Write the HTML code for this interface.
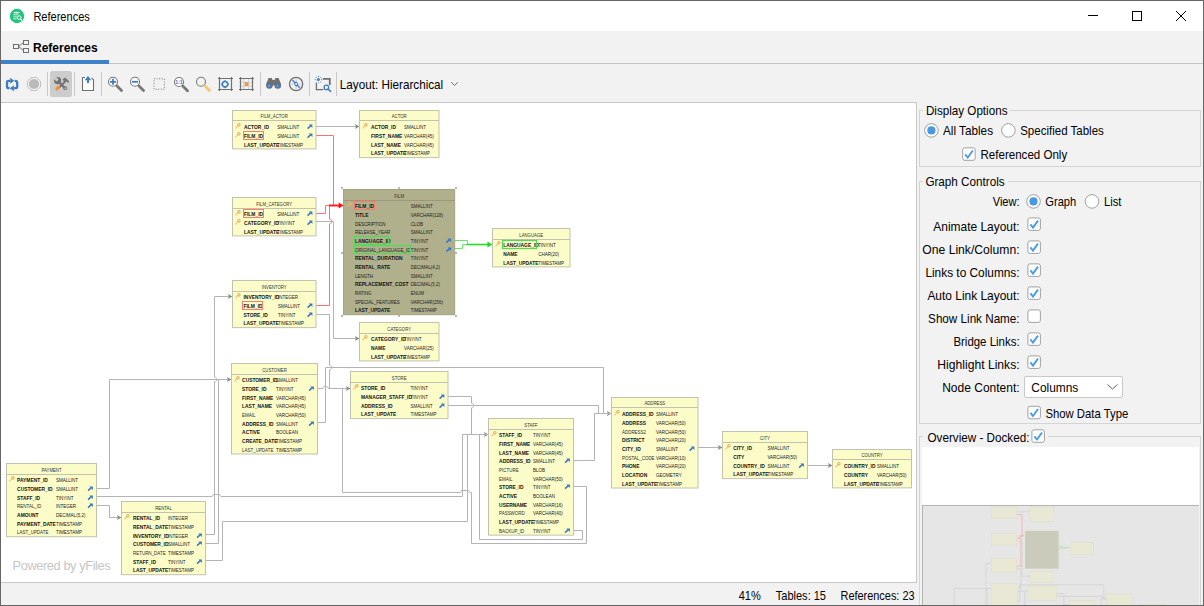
<!DOCTYPE html>
<html><head><meta charset="utf-8">
<style>
*{box-sizing:border-box}
html,body{margin:0;padding:0}
body{width:1204px;height:606px;overflow:hidden;position:relative;background:#f2f2f2;font-family:"Liberation Sans",sans-serif;color:#000}
.abs{position:absolute}
#win{position:absolute;left:0;top:0;width:1204px;height:606px;border:1px solid #666;pointer-events:none;z-index:50}
#title{left:0;top:0;width:1204px;height:31px;background:#fff}
.t{position:absolute;white-space:nowrap;line-height:1}
.sep{position:absolute;top:72px;width:1px;height:24px;background:#c8c8c8}
svg text.th{font-family:"Liberation Sans",sans-serif;font-size:5.05px;fill:#333;text-anchor:middle}
svg text.b{font-family:"Liberation Sans",sans-serif;font-size:4.9px;font-weight:bold;fill:#111}
svg text.r{font-family:"Liberation Sans",sans-serif;font-size:5.05px;fill:#2e2e2e}
svg text.rg{font-family:"Liberation Sans",sans-serif;font-size:5.05px;fill:#1a1a1a}
svg text.ty{font-family:"Liberation Sans",sans-serif;font-size:5.05px;fill:#222}
.gb{position:absolute;border:1px solid #d4d4d4}
.lbl{position:absolute;font-size:11.6px;white-space:nowrap;line-height:1;color:#000}
.cb{position:absolute;width:14px;height:14px;border:1px solid #9a9a9a;border-radius:2px;background:#fff}
.rb{position:absolute;width:14px;height:14px;border:1px solid #8a8a8a;border-radius:50%;background:#fff}
</style></head><body>
<div id="title" class="abs"></div>
<!-- app icon -->
<svg class="abs" style="left:9px;top:8px" width="16" height="16" viewBox="0 0 16 16">
 <circle cx="8" cy="8" r="7.2" fill="#21c47c"/>
 <ellipse cx="7.5" cy="4.6" rx="3.2" ry="0.9" fill="#fff"/>
 <rect x="4.3" y="6.3" width="5" height="1" fill="#c8f0dc"/>
 <rect x="4.3" y="8.3" width="3.5" height="1" fill="#c8f0dc"/>
 <rect x="4.3" y="10.3" width="3.5" height="1" fill="#c8f0dc"/>
 <circle cx="10.2" cy="9.6" r="1.8" fill="none" stroke="#fff" stroke-width="1"/>
 <path d="M11.4 10.9 L12.9 12.4" stroke="#fff" stroke-width="1.2"/>
</svg>
<!-- window buttons -->
<div class="abs" style="left:1088px;top:15px;width:10px;height:1px;background:#000"></div>
<div class="abs" style="left:1132px;top:11px;width:10px;height:10px;border:1px solid #000"></div>
<svg class="abs" style="left:1175px;top:10px" width="12" height="12" viewBox="0 0 12 12"><path d="M1 1 L11 11 M11 1 L1 11" stroke="#000" stroke-width="1"/></svg>

<!-- tab -->
<svg class="abs" style="left:12px;top:39px" width="18" height="15" viewBox="0 0 18 15">
 <rect x="1.5" y="5.5" width="5" height="4" fill="none" stroke="#707070"/>
 <rect x="11.5" y="1.5" width="5" height="4" fill="none" stroke="#707070"/>
 <rect x="11.5" y="9.5" width="5" height="4" fill="none" stroke="#707070"/>
 <path d="M6.5 7.5 L11.5 3.5 M6.5 7.5 L11.5 11.5" stroke="#707070" fill="none"/>
</svg>
<div class="t" style="left:33px;top:42px;font-size:12px;font-weight:bold">References</div>
<div class="abs" style="left:1px;top:60px;width:108px;height:4px;background:#3d82c8"></div>
<div class="abs" style="left:109px;top:63px;width:1094px;height:1px;background:#c4c4c4"></div>

<!-- toolbar -->
<svg class="abs" style="left:0;top:64px" width="470" height="38" viewBox="0 64 470 38">
 <!-- refresh -->
 <g fill="none" stroke="#3d7cc4" stroke-width="2.3">
  <path d="M10 80.8 L8.6 80.8 Q7 80.8 7 82.4 L7 86.4 Q7 88.2 8.8 88.2 L9.6 88.2"/>
  <path d="M14.6 80.8 L15.4 80.8 Q17.2 80.8 17.2 82.6 L17.2 86.4 Q17.2 88.2 15.4 88.2 L14 88.2"/>
 </g>
 <path d="M10.2 77.8 L14.2 80.8 L10.2 83.8 Z" fill="#3d7cc4"/>
 <path d="M13.8 85.2 L9.8 88.2 L13.8 91.2 Z" fill="#3d7cc4"/>
 <!-- stop -->
 <path d="M31.2 77.5 L36.8 77.5 L40.5 81.2 L40.5 86.8 L36.8 90.5 L31.2 90.5 L27.5 86.8 L27.5 81.2 Z" fill="none" stroke="#c2c2c2" stroke-width="1"/>
 <path d="M31.8 79.2 L36.2 79.2 L39 82 L39 86 L36.2 88.8 L31.8 88.8 L29 86 L29 82 Z" fill="#bababa"/>
 <!-- pressed button -->
 <rect x="50" y="71" width="22" height="26" rx="2.5" fill="#cccccc"/>
 <!-- hammer -->
 <path d="M65.2 81.5 L59.2 87.5" stroke="#737373" stroke-width="1.8"/>
 <path d="M62.6 79.2 L65.2 77.6 L69.2 81.4 L68.2 82.8 L65.8 81.6 L64.4 82.2 Z" fill="#737373"/>
 <path d="M56.9 88.9 L58.7 87.1" stroke="#f0913a" stroke-width="3.2" stroke-linecap="round"/>
 <!-- wrench -->
 <path d="M58.6 81.8 L64.8 88" stroke="#737373" stroke-width="2.2"/>
 <circle cx="57.6" cy="80.6" r="3.6" fill="#737373"/>
 <path d="M53.4 78.4 L56.6 81.4 L58.6 79.4 L55.4 76.2 Z" fill="#cccccc"/>
 <circle cx="65.2" cy="88.2" r="1.9" fill="#737373"/>
 <circle cx="65.4" cy="88.4" r="0.8" fill="#cccccc"/>
 <!-- export -->
 <path d="M85 77.5 L82.5 77.5 L82.5 90.5 L93.5 90.5 L93.5 79.8 L91.5 77.8" fill="#fff" stroke="#6e6e6e" stroke-width="1.1"/>
 <path d="M88 79 L88 83" stroke="#3d7cc4" stroke-width="2"/>
 <path d="M84.6 80.2 L88 76 L91.4 80.2 Z" fill="#3d7cc4"/>
 <!-- zoom in -->
 <circle cx="113" cy="81.8" r="4.5" fill="#fff" stroke="#777" stroke-width="1.1"/>
 <path d="M117 86 L121.5 90.4" stroke="#777" stroke-width="2.8" stroke-linecap="round"/>
 <path d="M110 81.8 L116 81.8 M113 78.8 L113 84.8" stroke="#3d7cc4" stroke-width="1.8"/>
 <!-- zoom out -->
 <circle cx="135" cy="81.8" r="4.5" fill="#fff" stroke="#777" stroke-width="1.1"/>
 <path d="M139 86 L143.5 90.4" stroke="#777" stroke-width="2.8" stroke-linecap="round"/>
 <path d="M132 81.8 L138 81.8" stroke="#3d7cc4" stroke-width="1.8"/>
 <!-- dashed rect -->
 <rect x="154" y="78.8" width="10.4" height="10.4" fill="none" stroke="#777" stroke-width="1" stroke-dasharray="1 1.6"/>
 <!-- 1:1 -->
 <circle cx="179" cy="82" r="4.5" fill="#fff" stroke="#777" stroke-width="1.1"/>
 <path d="M183 86.3 L187.5 90.7" stroke="#777" stroke-width="2.8" stroke-linecap="round"/>
 <text x="179" y="83.9" font-size="5.2" font-weight="bold" fill="#3d7cc4" text-anchor="middle" font-family="Liberation Sans">1:1</text>
 <!-- yellow magnifier -->
 <circle cx="201" cy="81.7" r="4.5" fill="none" stroke="#777" stroke-width="1.1"/>
 <path d="M205 86 L209.5 90.6" stroke="#f0c878" stroke-width="2.8" stroke-linecap="round"/>
 <!-- fit -->
 <path d="M219.5 78.5 L231.5 78.5 L231.5 89.5 L219.5 89.5 Z M218 78.5 L233 78.5 M218 89.5 L233 89.5 M219.5 77 L219.5 91 M231.5 77 L231.5 91" fill="none" stroke="#707070" stroke-width="1.2"/>
 <circle cx="225" cy="84.2" r="2.6" fill="#fff" stroke="#3d7cc4" stroke-width="1.5"/>
 <path d="M225 80 L226.6 81.8 L223.4 81.8 Z M225 88.4 L226.6 86.6 L223.4 86.6 Z M220.8 84.2 L222.6 82.6 L222.6 85.8 Z M229.2 84.2 L227.4 82.6 L227.4 85.8 Z" fill="#3d7cc4"/>
 <!-- grid -->
 <path d="M243.8 78.5 L243.8 90 M248.6 78.5 L248.6 90 M239.5 82.4 L253 82.4 M239.5 86.2 L253 86.2" stroke="#cfcfcf" stroke-width="0.9"/>
 <path d="M240.5 78.5 L252.5 78.5 L252.5 89.5 L240.5 89.5 Z M239 78.5 L254 78.5 M239 89.5 L254 89.5 M240.5 77 L240.5 91 M252.5 77 L252.5 91" fill="none" stroke="#707070" stroke-width="1.2"/>
 <rect x="244.6" y="82.2" width="3.8" height="3.8" fill="#ef9448"/>
 <!-- binoculars -->
 <path d="M268.6 78 L271.8 78 L272.6 80 L274.6 80 L275.4 78 L278.6 78 L280.4 82.5 L281 85.5 L266.2 85.5 L266.8 82.5 Z" fill="#707070"/>
 <circle cx="269.4" cy="85.4" r="3.3" fill="#707070"/><circle cx="277.8" cy="85.4" r="3.3" fill="#707070"/>
 <circle cx="269.4" cy="85.6" r="2.1" fill="#3d7cc4"/><circle cx="277.8" cy="85.6" r="2.1" fill="#3d7cc4"/>
 <path d="M267.8 86.6 L269.6 84.6 L269.6 86.6 Z M276.2 86.6 L278 84.6 L278 86.6 Z" fill="#ffffff" opacity="0.5"/>
 <!-- compass -->
 <circle cx="296.1" cy="84" r="6.6" fill="none" stroke="#707070" stroke-width="1.3"/>
 <path d="M292.4 80.2 L299.8 87.8" stroke="#3d7cc4" stroke-width="1.3"/>
 <path d="M296.1 80.9 L298.3 84 L296.1 87.1 L293.9 84 Z" fill="#3d7cc4"/>
 <circle cx="296.1" cy="84" r="0.9" fill="#fff"/>
 <circle cx="296.1" cy="80" r="0.55" fill="#888"/><circle cx="296.1" cy="88" r="0.55" fill="#888"/>
 <circle cx="292.1" cy="84" r="0.55" fill="#888"/><circle cx="300.1" cy="84" r="0.55" fill="#888"/>
 <!-- layout icon -->
 <path d="M316.4 83 L316.4 89.6 L323.4 89.6" fill="none" stroke="#707070" stroke-width="1.3"/>
 <path d="M322.8 78.8 L329.8 78.8 L329.8 85" fill="none" stroke="#707070" stroke-width="1.8"/>
 <circle cx="318.4" cy="79.6" r="1.5" fill="#3d7cc4"/>
 <g fill="#3d7cc4"><circle cx="318.4" cy="76.4" r="0.55"/><circle cx="318.4" cy="82.8" r="0.55"/><circle cx="315.2" cy="79.6" r="0.55"/><circle cx="321.6" cy="79.6" r="0.55"/>
 <circle cx="316.1" cy="77.3" r="0.5"/><circle cx="320.7" cy="77.3" r="0.5"/><circle cx="316.1" cy="81.9" r="0.5"/><circle cx="320.7" cy="81.9" r="0.5"/></g>
 <circle cx="326.4" cy="87.4" r="2.2" fill="#fff" stroke="#3d7cc4" stroke-width="1.3"/>
 <path d="M328 89 L330.6 91.4" stroke="#3d7cc4" stroke-width="1.6" stroke-linecap="round"/>
 <!-- chevron -->
 <path d="M451.2 82.2 L454.5 85.5 L457.8 82.2" fill="none" stroke="#707070" stroke-width="1"/>
</svg>
<div class="sep" style="left:47px"></div>
<div class="sep" style="left:74px"></div>
<div class="sep" style="left:101px"></div>
<div class="sep" style="left:260px"></div>
<div class="sep" style="left:309px"></div>
<div class="sep" style="left:336px"></div>

<!-- canvas -->
<div class="abs" style="left:1px;top:102px;width:916px;height:481px;background:#fff;border:1px solid #c8c8c8;border-left:none"></div>
<svg class="abs" style="left:0;top:0" width="917" height="583" viewBox="0 0 917 583">
<defs><clipPath id="cv"><rect x="1" y="103" width="915" height="479"/></clipPath></defs>
<g clip-path="url(#cv)">
<path d="M316 126.5 L359 126.5" stroke="#b4b4b4" stroke-width="1" fill="none"/>
<path d="M354.9 124.1 L359.5 126.5 L354.9 128.9 L355.9 126.5 Z" fill="#8a8a8a"/>
<path d="M316 221.5 L333.5 221.5 L333.5 338.5 L359 338.5" stroke="#b4b4b4" stroke-width="1" fill="none"/>
<path d="M354.9 336.1 L359.5 338.5 L354.9 340.9 L355.9 338.5 Z" fill="#8a8a8a"/>
<path d="M316 314.5 L329.5 314.5 L329.5 365.1 C332.5 365.1 332.5 369.9 329.5 369.9 L329.5 388.5 L350 388.5" stroke="#b4b4b4" stroke-width="1" fill="none"/>
<path d="M345.9 386.1 L350.5 388.5 L345.9 390.9 L346.9 388.5 Z" fill="#8a8a8a"/>
<path d="M318 388.5 L322.9 388.5 C322.9 385.3 328.1 385.3 328.1 388.5 L329.5 388.5" stroke="#b4b4b4" stroke-width="1" fill="none"/>
<path d="M318 422.5 L325.5 422.5 L325.5 367.5 L603.5 367.5 L603.5 413.5 L611 413.5" stroke="#b4b4b4" stroke-width="1" fill="none"/>
<path d="M606.9 411.1 L611.5 413.5 L606.9 415.9 L607.9 413.5 Z" fill="#8a8a8a"/>
<path d="M448 396.5 L471.5 396.5 L471.5 403.1 C474.5 403.1 474.5 407.9 471.5 407.9 L471.5 434.5 L488 434.5" stroke="#b4b4b4" stroke-width="1" fill="none"/>
<path d="M483.9 432.1 L488.5 434.5 L483.9 436.9 L484.9 434.5 Z" fill="#8a8a8a"/>
<path d="M448 405.5 L598.5 405.5 L598.5 413.5 L611 413.5" stroke="#b4b4b4" stroke-width="1" fill="none"/>
<path d="M574 460.5 L594.5 460.5 L594.5 413.5 L611 413.5" stroke="#b4b4b4" stroke-width="1" fill="none"/>
<path d="M574 486.5 L586.5 486.5 L586.5 543.5 L471.5 543.5 L471.5 492.5 L469.8 492.5 L468.7 490.5 L461.3 490.5 L460.2 492.5 L342.5 492.5 L342.5 388.5" stroke="#b4b4b4" stroke-width="1" fill="none"/>
<path d="M574 530.5 L582.5 530.5 L582.5 539.5 L479.5 539.5 L479.5 434.5 L488 434.5" stroke="#b4b4b4" stroke-width="1" fill="none"/>
<path d="M698 447.5 L722 447.5" stroke="#b4b4b4" stroke-width="1" fill="none"/>
<path d="M717.9 445.1 L722.5 447.5 L717.9 449.9 L718.9 447.5 Z" fill="#8a8a8a"/>
<path d="M808 465.5 L832 465.5" stroke="#b4b4b4" stroke-width="1" fill="none"/>
<path d="M827.9 463.1 L832.5 465.5 L827.9 467.9 L828.9 465.5 Z" fill="#8a8a8a"/>
<path d="M97 488.5 L109.5 488.5 L109.5 379.5 L231 379.5" stroke="#b4b4b4" stroke-width="1" fill="none"/>
<path d="M226.9 377.1 L231.5 379.5 L226.9 381.9 L227.9 379.5 Z" fill="#8a8a8a"/>
<path d="M97 496.5 L212.2 496.5 L213.3 494.5 L219.7 494.5 L220.8 496.5 L462.5 496.5 L462.5 434.5 L488 434.5" stroke="#b4b4b4" stroke-width="1" fill="none"/>
<path d="M97 505.5 L109.5 505.5 L109.5 517.5 L121 517.5" stroke="#b4b4b4" stroke-width="1" fill="none"/>
<path d="M116.9 515.1 L121.5 517.5 L116.9 519.9 L117.9 517.5 Z" fill="#8a8a8a"/>
<path d="M206 534.5 L214.5 534.5 L214.5 381.9 C217.5 381.9 217.5 377.1 214.5 377.1 L214.5 296.5 L232 296.5" stroke="#b4b4b4" stroke-width="1" fill="none"/>
<path d="M227.9 294.1 L232.5 296.5 L227.9 298.9 L228.9 296.5 Z" fill="#8a8a8a"/>
<path d="M206 543.5 L218.5 543.5 L218.5 379.5" stroke="#b4b4b4" stroke-width="1" fill="none"/>
<path d="M206 560.5 L222.5 560.5 L222.5 521.5 L467.5 521.5 L467.5 434.5 L488 434.5" stroke="#b4b4b4" stroke-width="1" fill="none"/>
<path d="M316 135.5 L333.5 135.5 L333.5 205.5" stroke="#ff7070" stroke-width="1" fill="none"/>
<path d="M316 213.5 L325.5 213.5 L325.5 205.5 L339 205.5" stroke="#ff7070" stroke-width="1" fill="none"/>
<path d="M316 305.5 L329.5 305.5 L329.5 223.9 C332.5 223.9 332.5 219.1 329.5 219.1 L329.5 205.5" stroke="#ff7070" stroke-width="1" fill="none"/>
<path d="M329 205.5 L340 205.5" stroke="#ff2020" stroke-width="2" fill="none"/>
<path d="M338.6 202.6 L343.6 205.5 L338.6 208.4 Z" fill="#ff1010"/>
<path d="M455 240.5 L467.5 240.5 L467.5 244.5" stroke="#60ec60" stroke-width="1" fill="none"/>
<path d="M455 248.5 L462.5 248.5 L462.5 244.5 L467.5 244.5" stroke="#60ec60" stroke-width="1" fill="none"/>
<path d="M467 244.5 L488 244.5" stroke="#22e022" stroke-width="1.6" fill="none"/>
<path d="M487.4 241.6 L492.4 244.5 L487.4 247.4 Z" fill="#20dd20"/>
<rect x="232.5" y="110.5" width="83.5" height="38.4" fill="#fcfcc8" stroke="#c2c2ae" stroke-width="1"/>
<line x1="232.5" y1="120.5" x2="316.0" y2="120.5" stroke="#c2c2ae" stroke-width="1"/>
<text x="274.2" y="117.9" class="th" textLength="27.2" lengthAdjust="spacingAndGlyphs">FILM_ACTOR</text>
<text x="244.0" y="128.8" class="b">ACTOR_ID</text>
<text x="277.2" y="128.8" class="ty" textLength="22.0" lengthAdjust="spacingAndGlyphs">SMALLINT</text>
<g transform="translate(235.6,127.0)" stroke="#eab062" fill="none"><circle cx="3.3" cy="-2.3" r="1.2" stroke-width="1.1"/><path d="M2.4 -1.4 L-0.2 1.1" stroke-width="1"/><path d="M0.6 0.5 L1.3 1.2" stroke-width="0.7"/></g>
<g transform="translate(307.4,127.0)"><path d="M0.2 1.6 L3.4 -1.4" stroke="#3a78c8" stroke-width="1.5" fill="none"/><path d="M1.4 -2.6 L5 -2.6 L5 1 Z" fill="#3a78c8"/></g>
<text x="244.0" y="137.8" class="b">FILM_ID</text>
<text x="277.2" y="137.8" class="ty" textLength="22.0" lengthAdjust="spacingAndGlyphs">SMALLINT</text>
<g transform="translate(235.6,136.0)" stroke="#eab062" fill="none"><circle cx="3.3" cy="-2.3" r="1.2" stroke-width="1.1"/><path d="M2.4 -1.4 L-0.2 1.1" stroke-width="1"/><path d="M0.6 0.5 L1.3 1.2" stroke-width="0.7"/></g>
<g transform="translate(307.4,136.0)"><path d="M0.2 1.6 L3.4 -1.4" stroke="#3a78c8" stroke-width="1.5" fill="none"/><path d="M1.4 -2.6 L5 -2.6 L5 1 Z" fill="#3a78c8"/></g>
<rect x="243.5" y="131.5" width="20" height="8" fill="none" stroke="#ff7a6a" stroke-width="1"/>
<text x="244.0" y="146.8" class="b">LAST_UPDATE</text>
<text x="277.2" y="146.8" class="ty" textLength="25.9" lengthAdjust="spacingAndGlyphs">TIMESTAMP</text>
<rect x="359.5" y="110.5" width="79.5" height="47.1" fill="#fcfcc8" stroke="#c2c2ae" stroke-width="1"/>
<line x1="359.5" y1="120.5" x2="439.0" y2="120.5" stroke="#c2c2ae" stroke-width="1"/>
<text x="399.2" y="117.9" class="th" textLength="15.0" lengthAdjust="spacingAndGlyphs">ACTOR</text>
<text x="371.0" y="128.8" class="b">ACTOR_ID</text>
<text x="404.0" y="128.8" class="ty" textLength="22.0" lengthAdjust="spacingAndGlyphs">SMALLINT</text>
<g transform="translate(362.6,127.0)" stroke="#eab062" fill="none"><circle cx="3.3" cy="-2.3" r="1.2" stroke-width="1.1"/><path d="M2.4 -1.4 L-0.2 1.1" stroke-width="1"/><path d="M0.6 0.5 L1.3 1.2" stroke-width="0.7"/></g>
<text x="371.0" y="137.8" class="b">FIRST_NAME</text>
<text x="404.0" y="137.8" class="ty" textLength="29.7" lengthAdjust="spacingAndGlyphs">VARCHAR(45)</text>
<text x="371.0" y="146.8" class="b">LAST_NAME</text>
<text x="404.0" y="146.8" class="ty" textLength="29.7" lengthAdjust="spacingAndGlyphs">VARCHAR(45)</text>
<text x="371.0" y="154.8" class="b">LAST_UPDATE</text>
<text x="404.0" y="154.8" class="ty" textLength="25.9" lengthAdjust="spacingAndGlyphs">TIMESTAMP</text>
<rect x="343.5" y="189.5" width="111.2" height="125.2" fill="#b0b08c" stroke="#a4a482" stroke-width="1"/>
<line x1="343.5" y1="200.5" x2="454.7" y2="200.5" stroke="#9a9a7a" stroke-width="1"/>
<text x="399.1" y="197.9" class="th" textLength="9.8" lengthAdjust="spacingAndGlyphs">FILM</text>
<text x="355.0" y="207.8" class="b">FILM_ID</text>
<text x="410.8" y="207.8" class="ty" textLength="22.0" lengthAdjust="spacingAndGlyphs">SMALLINT</text>
<g transform="translate(346.6,206.0)" stroke="#eab062" fill="none"><circle cx="3.3" cy="-2.3" r="1.2" stroke-width="1.1"/><path d="M2.4 -1.4 L-0.2 1.1" stroke-width="1"/><path d="M0.6 0.5 L1.3 1.2" stroke-width="0.7"/></g>
<rect x="354.5" y="201.5" width="20" height="8" fill="none" stroke="#ff7a6a" stroke-width="1"/>
<text x="355.0" y="216.8" class="b">TITLE</text>
<text x="410.8" y="216.8" class="ty" textLength="32.2" lengthAdjust="spacingAndGlyphs">VARCHAR(128)</text>
<text x="355.0" y="225.8" class="rg" textLength="30.4" lengthAdjust="spacingAndGlyphs">DESCRIPTION</text>
<text x="410.8" y="225.8" class="ty" textLength="12.3" lengthAdjust="spacingAndGlyphs">CLOB</text>
<text x="355.0" y="233.8" class="rg" textLength="35.1" lengthAdjust="spacingAndGlyphs">RELEASE_YEAR</text>
<text x="410.8" y="233.8" class="ty" textLength="22.0" lengthAdjust="spacingAndGlyphs">SMALLINT</text>
<text x="355.0" y="242.8" class="b">LANGUAGE_ID</text>
<text x="410.8" y="242.8" class="ty" textLength="17.5" lengthAdjust="spacingAndGlyphs">TINYINT</text>
<g transform="translate(446.1,241.0)"><path d="M0.2 1.6 L3.4 -1.4" stroke="#3a78c8" stroke-width="1.5" fill="none"/><path d="M1.4 -2.6 L5 -2.6 L5 1 Z" fill="#3a78c8"/></g>
<rect x="354.5" y="236.5" width="34" height="8" fill="none" stroke="#58d858" stroke-width="1.3"/>
<text x="355.0" y="251.8" class="rg" textLength="55.4" lengthAdjust="spacingAndGlyphs">ORIGINAL_LANGUAGE_ID</text>
<text x="410.8" y="251.8" class="ty" textLength="17.5" lengthAdjust="spacingAndGlyphs">TINYINT</text>
<g transform="translate(446.1,250.0)"><path d="M0.2 1.6 L3.4 -1.4" stroke="#3a78c8" stroke-width="1.5" fill="none"/><path d="M1.4 -2.6 L5 -2.6 L5 1 Z" fill="#3a78c8"/></g>
<rect x="354.5" y="245.5" width="56" height="8" fill="none" stroke="#58d858" stroke-width="1.3"/>
<text x="355.0" y="259.8" class="b">RENTAL_DURATION</text>
<text x="410.8" y="259.8" class="ty" textLength="17.5" lengthAdjust="spacingAndGlyphs">TINYINT</text>
<text x="355.0" y="268.8" class="b">RENTAL_RATE</text>
<text x="410.8" y="268.8" class="ty" textLength="29.3" lengthAdjust="spacingAndGlyphs">DECIMAL(4,2)</text>
<text x="355.0" y="277.8" class="rg" textLength="18.0" lengthAdjust="spacingAndGlyphs">LENGTH</text>
<text x="410.8" y="277.8" class="ty" textLength="22.0" lengthAdjust="spacingAndGlyphs">SMALLINT</text>
<text x="355.0" y="285.8" class="b">REPLACEMENT_COST</text>
<text x="410.8" y="285.8" class="ty" textLength="29.3" lengthAdjust="spacingAndGlyphs">DECIMAL(5,2)</text>
<text x="355.0" y="294.8" class="rg" textLength="16.5" lengthAdjust="spacingAndGlyphs">RATING</text>
<text x="410.8" y="294.8" class="ty" textLength="13.2" lengthAdjust="spacingAndGlyphs">ENUM</text>
<text x="355.0" y="303.8" class="rg" textLength="44.7" lengthAdjust="spacingAndGlyphs">SPECIAL_FEATURES</text>
<text x="410.8" y="303.8" class="ty" textLength="32.2" lengthAdjust="spacingAndGlyphs">VARCHAR(256)</text>
<text x="355.0" y="311.8" class="b">LAST_UPDATE</text>
<text x="410.8" y="311.8" class="ty" textLength="25.9" lengthAdjust="spacingAndGlyphs">TIMESTAMP</text>
<rect x="232.5" y="197.5" width="83.5" height="38.4" fill="#fcfcc8" stroke="#c2c2ae" stroke-width="1"/>
<line x1="232.5" y1="208.5" x2="316.0" y2="208.5" stroke="#c2c2ae" stroke-width="1"/>
<text x="274.2" y="205.9" class="th" textLength="35.9" lengthAdjust="spacingAndGlyphs">FILM_CATEGORY</text>
<text x="244.0" y="215.8" class="b">FILM_ID</text>
<text x="277.2" y="215.8" class="ty" textLength="22.0" lengthAdjust="spacingAndGlyphs">SMALLINT</text>
<g transform="translate(235.6,214.0)" stroke="#eab062" fill="none"><circle cx="3.3" cy="-2.3" r="1.2" stroke-width="1.1"/><path d="M2.4 -1.4 L-0.2 1.1" stroke-width="1"/><path d="M0.6 0.5 L1.3 1.2" stroke-width="0.7"/></g>
<g transform="translate(307.4,214.0)"><path d="M0.2 1.6 L3.4 -1.4" stroke="#3a78c8" stroke-width="1.5" fill="none"/><path d="M1.4 -2.6 L5 -2.6 L5 1 Z" fill="#3a78c8"/></g>
<rect x="243.5" y="209.5" width="20" height="8" fill="none" stroke="#ff7a6a" stroke-width="1"/>
<text x="244.0" y="224.8" class="b">CATEGORY_ID</text>
<text x="277.2" y="224.8" class="ty" textLength="17.5" lengthAdjust="spacingAndGlyphs">TINYINT</text>
<g transform="translate(235.6,223.0)" stroke="#eab062" fill="none"><circle cx="3.3" cy="-2.3" r="1.2" stroke-width="1.1"/><path d="M2.4 -1.4 L-0.2 1.1" stroke-width="1"/><path d="M0.6 0.5 L1.3 1.2" stroke-width="0.7"/></g>
<g transform="translate(307.4,223.0)"><path d="M0.2 1.6 L3.4 -1.4" stroke="#3a78c8" stroke-width="1.5" fill="none"/><path d="M1.4 -2.6 L5 -2.6 L5 1 Z" fill="#3a78c8"/></g>
<text x="244.0" y="233.8" class="b">LAST_UPDATE</text>
<text x="277.2" y="233.8" class="ty" textLength="25.9" lengthAdjust="spacingAndGlyphs">TIMESTAMP</text>
<rect x="232.5" y="280.5" width="83.5" height="47.1" fill="#fcfcc8" stroke="#c2c2ae" stroke-width="1"/>
<line x1="232.5" y1="291.5" x2="316.0" y2="291.5" stroke="#c2c2ae" stroke-width="1"/>
<text x="274.2" y="288.9" class="th" textLength="24.9" lengthAdjust="spacingAndGlyphs">INVENTORY</text>
<text x="243.5" y="298.8" class="b">INVENTORY_ID</text>
<text x="278.0" y="298.8" class="ty" textLength="20.0" lengthAdjust="spacingAndGlyphs">INTEGER</text>
<g transform="translate(235.6,297.0)" stroke="#eab062" fill="none"><circle cx="3.3" cy="-2.3" r="1.2" stroke-width="1.1"/><path d="M2.4 -1.4 L-0.2 1.1" stroke-width="1"/><path d="M0.6 0.5 L1.3 1.2" stroke-width="0.7"/></g>
<text x="243.5" y="307.8" class="b">FILM_ID</text>
<text x="278.0" y="307.8" class="ty" textLength="22.0" lengthAdjust="spacingAndGlyphs">SMALLINT</text>
<g transform="translate(307.4,306.0)"><path d="M0.2 1.6 L3.4 -1.4" stroke="#3a78c8" stroke-width="1.5" fill="none"/><path d="M1.4 -2.6 L5 -2.6 L5 1 Z" fill="#3a78c8"/></g>
<rect x="242.5" y="301.5" width="20" height="8" fill="none" stroke="#ff7a6a" stroke-width="1"/>
<text x="243.5" y="316.8" class="b">STORE_ID</text>
<text x="278.0" y="316.8" class="ty" textLength="17.5" lengthAdjust="spacingAndGlyphs">TINYINT</text>
<g transform="translate(307.4,315.0)"><path d="M0.2 1.6 L3.4 -1.4" stroke="#3a78c8" stroke-width="1.5" fill="none"/><path d="M1.4 -2.6 L5 -2.6 L5 1 Z" fill="#3a78c8"/></g>
<text x="243.5" y="324.8" class="b">LAST_UPDATE</text>
<text x="278.0" y="324.8" class="ty" textLength="25.9" lengthAdjust="spacingAndGlyphs">TIMESTAMP</text>
<rect x="492.5" y="228.5" width="77.5" height="38.4" fill="#fcfcc8" stroke="#c2c2ae" stroke-width="1"/>
<line x1="492.5" y1="239.5" x2="570.0" y2="239.5" stroke="#c2c2ae" stroke-width="1"/>
<text x="531.2" y="236.9" class="th" textLength="23.9" lengthAdjust="spacingAndGlyphs">LANGUAGE</text>
<text x="503.2" y="246.8" class="b">LANGUAGE_ID</text>
<text x="538.2" y="246.8" class="ty" textLength="17.5" lengthAdjust="spacingAndGlyphs">TINYINT</text>
<g transform="translate(495.6,245.0)" stroke="#eab062" fill="none"><circle cx="3.3" cy="-2.3" r="1.2" stroke-width="1.1"/><path d="M2.4 -1.4 L-0.2 1.1" stroke-width="1"/><path d="M0.6 0.5 L1.3 1.2" stroke-width="0.7"/></g>
<rect x="502.5" y="240.5" width="34" height="8" fill="none" stroke="#58d858" stroke-width="1.3"/>
<text x="503.2" y="255.8" class="b">NAME</text>
<text x="538.2" y="255.8" class="ty" textLength="20.8" lengthAdjust="spacingAndGlyphs">CHAR(20)</text>
<text x="503.2" y="264.8" class="b">LAST_UPDATE</text>
<text x="538.2" y="264.8" class="ty" textLength="25.9" lengthAdjust="spacingAndGlyphs">TIMESTAMP</text>
<rect x="359.5" y="322.5" width="79.5" height="38.4" fill="#fcfcc8" stroke="#c2c2ae" stroke-width="1"/>
<line x1="359.5" y1="333.5" x2="439.0" y2="333.5" stroke="#c2c2ae" stroke-width="1"/>
<text x="399.2" y="330.9" class="th" textLength="23.7" lengthAdjust="spacingAndGlyphs">CATEGORY</text>
<text x="371.0" y="340.8" class="b">CATEGORY_ID</text>
<text x="404.0" y="340.8" class="ty" textLength="17.5" lengthAdjust="spacingAndGlyphs">TINYINT</text>
<g transform="translate(362.6,339.0)" stroke="#eab062" fill="none"><circle cx="3.3" cy="-2.3" r="1.2" stroke-width="1.1"/><path d="M2.4 -1.4 L-0.2 1.1" stroke-width="1"/><path d="M0.6 0.5 L1.3 1.2" stroke-width="0.7"/></g>
<text x="371.0" y="349.8" class="b">NAME</text>
<text x="404.0" y="349.8" class="ty" textLength="29.7" lengthAdjust="spacingAndGlyphs">VARCHAR(25)</text>
<text x="371.0" y="358.8" class="b">LAST_UPDATE</text>
<text x="404.0" y="358.8" class="ty" textLength="25.9" lengthAdjust="spacingAndGlyphs">TIMESTAMP</text>
<rect x="231.5" y="363.5" width="86.0" height="90.5" fill="#fcfcc8" stroke="#c2c2ae" stroke-width="1"/>
<line x1="231.5" y1="374.5" x2="317.5" y2="374.5" stroke="#c2c2ae" stroke-width="1"/>
<text x="274.5" y="371.9" class="th" textLength="24.5" lengthAdjust="spacingAndGlyphs">CUSTOMER</text>
<text x="242.1" y="381.8" class="b">CUSTOMER_ID</text>
<text x="276.1" y="381.8" class="ty" textLength="22.0" lengthAdjust="spacingAndGlyphs">SMALLINT</text>
<g transform="translate(234.6,380.0)" stroke="#eab062" fill="none"><circle cx="3.3" cy="-2.3" r="1.2" stroke-width="1.1"/><path d="M2.4 -1.4 L-0.2 1.1" stroke-width="1"/><path d="M0.6 0.5 L1.3 1.2" stroke-width="0.7"/></g>
<text x="242.1" y="390.8" class="b">STORE_ID</text>
<text x="276.1" y="390.8" class="ty" textLength="17.5" lengthAdjust="spacingAndGlyphs">TINYINT</text>
<g transform="translate(308.9,389.0)"><path d="M0.2 1.6 L3.4 -1.4" stroke="#3a78c8" stroke-width="1.5" fill="none"/><path d="M1.4 -2.6 L5 -2.6 L5 1 Z" fill="#3a78c8"/></g>
<text x="242.1" y="399.8" class="b">FIRST_NAME</text>
<text x="276.1" y="399.8" class="ty" textLength="29.7" lengthAdjust="spacingAndGlyphs">VARCHAR(45)</text>
<text x="242.1" y="407.8" class="b">LAST_NAME</text>
<text x="276.1" y="407.8" class="ty" textLength="29.7" lengthAdjust="spacingAndGlyphs">VARCHAR(45)</text>
<text x="242.1" y="416.8" class="r" textLength="13.4" lengthAdjust="spacingAndGlyphs">EMAIL</text>
<text x="276.1" y="416.8" class="ty" textLength="29.7" lengthAdjust="spacingAndGlyphs">VARCHAR(50)</text>
<text x="242.1" y="425.8" class="b">ADDRESS_ID</text>
<text x="276.1" y="425.8" class="ty" textLength="22.0" lengthAdjust="spacingAndGlyphs">SMALLINT</text>
<g transform="translate(308.9,424.0)"><path d="M0.2 1.6 L3.4 -1.4" stroke="#3a78c8" stroke-width="1.5" fill="none"/><path d="M1.4 -2.6 L5 -2.6 L5 1 Z" fill="#3a78c8"/></g>
<text x="242.1" y="433.8" class="b">ACTIVE</text>
<text x="276.1" y="433.8" class="ty" textLength="21.8" lengthAdjust="spacingAndGlyphs">BOOLEAN</text>
<text x="242.1" y="442.8" class="b">CREATE_DATE</text>
<text x="276.1" y="442.8" class="ty" textLength="25.9" lengthAdjust="spacingAndGlyphs">TIMESTAMP</text>
<text x="242.1" y="451.8" class="r" textLength="31.3" lengthAdjust="spacingAndGlyphs">LAST_UPDATE</text>
<text x="276.1" y="451.8" class="ty" textLength="25.9" lengthAdjust="spacingAndGlyphs">TIMESTAMP</text>
<rect x="350.5" y="371.5" width="97.5" height="47.1" fill="#fcfcc8" stroke="#c2c2ae" stroke-width="1"/>
<line x1="350.5" y1="382.5" x2="448.0" y2="382.5" stroke="#c2c2ae" stroke-width="1"/>
<text x="399.2" y="379.9" class="th" textLength="14.7" lengthAdjust="spacingAndGlyphs">STORE</text>
<text x="361.0" y="389.8" class="b">STORE_ID</text>
<text x="410.5" y="389.8" class="ty" textLength="17.5" lengthAdjust="spacingAndGlyphs">TINYINT</text>
<g transform="translate(353.6,388.0)" stroke="#eab062" fill="none"><circle cx="3.3" cy="-2.3" r="1.2" stroke-width="1.1"/><path d="M2.4 -1.4 L-0.2 1.1" stroke-width="1"/><path d="M0.6 0.5 L1.3 1.2" stroke-width="0.7"/></g>
<text x="361.0" y="398.8" class="b">MANAGER_STAFF_ID</text>
<text x="410.5" y="398.8" class="ty" textLength="17.5" lengthAdjust="spacingAndGlyphs">TINYINT</text>
<g transform="translate(439.4,397.0)"><path d="M0.2 1.6 L3.4 -1.4" stroke="#3a78c8" stroke-width="1.5" fill="none"/><path d="M1.4 -2.6 L5 -2.6 L5 1 Z" fill="#3a78c8"/></g>
<text x="361.0" y="407.8" class="b">ADDRESS_ID</text>
<text x="410.5" y="407.8" class="ty" textLength="22.0" lengthAdjust="spacingAndGlyphs">SMALLINT</text>
<g transform="translate(439.4,406.0)"><path d="M0.2 1.6 L3.4 -1.4" stroke="#3a78c8" stroke-width="1.5" fill="none"/><path d="M1.4 -2.6 L5 -2.6 L5 1 Z" fill="#3a78c8"/></g>
<text x="361.0" y="415.8" class="b">LAST_UPDATE</text>
<text x="410.5" y="415.8" class="ty" textLength="25.9" lengthAdjust="spacingAndGlyphs">TIMESTAMP</text>
<rect x="611.5" y="397.5" width="86.5" height="90.5" fill="#fcfcc8" stroke="#c2c2ae" stroke-width="1"/>
<line x1="611.5" y1="407.5" x2="698.0" y2="407.5" stroke="#c2c2ae" stroke-width="1"/>
<text x="654.8" y="404.9" class="th" textLength="20.8" lengthAdjust="spacingAndGlyphs">ADDRESS</text>
<text x="622.0" y="415.8" class="b">ADDRESS_ID</text>
<text x="656.0" y="415.8" class="ty" textLength="22.0" lengthAdjust="spacingAndGlyphs">SMALLINT</text>
<g transform="translate(614.6,414.0)" stroke="#eab062" fill="none"><circle cx="3.3" cy="-2.3" r="1.2" stroke-width="1.1"/><path d="M2.4 -1.4 L-0.2 1.1" stroke-width="1"/><path d="M0.6 0.5 L1.3 1.2" stroke-width="0.7"/></g>
<text x="622.0" y="424.8" class="b">ADDRESS</text>
<text x="656.0" y="424.8" class="ty" textLength="29.7" lengthAdjust="spacingAndGlyphs">VARCHAR(50)</text>
<text x="622.0" y="433.8" class="r" textLength="24.0" lengthAdjust="spacingAndGlyphs">ADDRESS2</text>
<text x="656.0" y="433.8" class="ty" textLength="29.7" lengthAdjust="spacingAndGlyphs">VARCHAR(50)</text>
<text x="622.0" y="441.8" class="b">DISTRICT</text>
<text x="656.0" y="441.8" class="ty" textLength="29.7" lengthAdjust="spacingAndGlyphs">VARCHAR(20)</text>
<text x="622.0" y="450.8" class="b">CITY_ID</text>
<text x="656.0" y="450.8" class="ty" textLength="22.0" lengthAdjust="spacingAndGlyphs">SMALLINT</text>
<g transform="translate(689.4,449.0)"><path d="M0.2 1.6 L3.4 -1.4" stroke="#3a78c8" stroke-width="1.5" fill="none"/><path d="M1.4 -2.6 L5 -2.6 L5 1 Z" fill="#3a78c8"/></g>
<text x="622.0" y="459.8" class="r" textLength="32.6" lengthAdjust="spacingAndGlyphs">POSTAL_CODE</text>
<text x="656.0" y="459.8" class="ty" textLength="29.7" lengthAdjust="spacingAndGlyphs">VARCHAR(10)</text>
<text x="622.0" y="467.8" class="b">PHONE</text>
<text x="656.0" y="467.8" class="ty" textLength="29.7" lengthAdjust="spacingAndGlyphs">VARCHAR(20)</text>
<text x="622.0" y="476.8" class="b">LOCATION</text>
<text x="656.0" y="476.8" class="ty" textLength="25.7" lengthAdjust="spacingAndGlyphs">GEOMETRY</text>
<text x="622.0" y="485.8" class="b">LAST_UPDATE</text>
<text x="656.0" y="485.8" class="ty" textLength="25.9" lengthAdjust="spacingAndGlyphs">TIMESTAMP</text>
<rect x="488.5" y="418.5" width="85.0" height="116.6" fill="#fcfcc8" stroke="#c2c2ae" stroke-width="1"/>
<line x1="488.5" y1="429.5" x2="573.5" y2="429.5" stroke="#c2c2ae" stroke-width="1"/>
<text x="531.0" y="426.9" class="th" textLength="13.3" lengthAdjust="spacingAndGlyphs">STAFF</text>
<text x="499.1" y="436.8" class="b">STAFF_ID</text>
<text x="533.1" y="436.8" class="ty" textLength="17.5" lengthAdjust="spacingAndGlyphs">TINYINT</text>
<g transform="translate(491.6,435.0)" stroke="#eab062" fill="none"><circle cx="3.3" cy="-2.3" r="1.2" stroke-width="1.1"/><path d="M2.4 -1.4 L-0.2 1.1" stroke-width="1"/><path d="M0.6 0.5 L1.3 1.2" stroke-width="0.7"/></g>
<text x="499.1" y="445.8" class="b">FIRST_NAME</text>
<text x="533.1" y="445.8" class="ty" textLength="29.7" lengthAdjust="spacingAndGlyphs">VARCHAR(45)</text>
<text x="499.1" y="454.8" class="b">LAST_NAME</text>
<text x="533.1" y="454.8" class="ty" textLength="29.7" lengthAdjust="spacingAndGlyphs">VARCHAR(45)</text>
<text x="499.1" y="462.8" class="b">ADDRESS_ID</text>
<text x="533.1" y="462.8" class="ty" textLength="22.0" lengthAdjust="spacingAndGlyphs">SMALLINT</text>
<g transform="translate(564.9,461.0)"><path d="M0.2 1.6 L3.4 -1.4" stroke="#3a78c8" stroke-width="1.5" fill="none"/><path d="M1.4 -2.6 L5 -2.6 L5 1 Z" fill="#3a78c8"/></g>
<text x="499.1" y="471.8" class="r" textLength="19.5" lengthAdjust="spacingAndGlyphs">PICTURE</text>
<text x="533.1" y="471.8" class="ty" textLength="12.0" lengthAdjust="spacingAndGlyphs">BLOB</text>
<text x="499.1" y="480.8" class="r" textLength="13.4" lengthAdjust="spacingAndGlyphs">EMAIL</text>
<text x="533.1" y="480.8" class="ty" textLength="29.7" lengthAdjust="spacingAndGlyphs">VARCHAR(50)</text>
<text x="499.1" y="488.8" class="b">STORE_ID</text>
<text x="533.1" y="488.8" class="ty" textLength="17.5" lengthAdjust="spacingAndGlyphs">TINYINT</text>
<g transform="translate(564.9,487.0)"><path d="M0.2 1.6 L3.4 -1.4" stroke="#3a78c8" stroke-width="1.5" fill="none"/><path d="M1.4 -2.6 L5 -2.6 L5 1 Z" fill="#3a78c8"/></g>
<text x="499.1" y="497.8" class="b">ACTIVE</text>
<text x="533.1" y="497.8" class="ty" textLength="21.8" lengthAdjust="spacingAndGlyphs">BOOLEAN</text>
<text x="499.1" y="506.8" class="b">USERNAME</text>
<text x="533.1" y="506.8" class="ty" textLength="29.7" lengthAdjust="spacingAndGlyphs">VARCHAR(16)</text>
<text x="499.1" y="514.8" class="r" textLength="25.6" lengthAdjust="spacingAndGlyphs">PASSWORD</text>
<text x="533.1" y="514.8" class="ty" textLength="29.7" lengthAdjust="spacingAndGlyphs">VARCHAR(40)</text>
<text x="499.1" y="523.8" class="b">LAST_UPDATE</text>
<text x="533.1" y="523.8" class="ty" textLength="25.9" lengthAdjust="spacingAndGlyphs">TIMESTAMP</text>
<text x="499.1" y="532.8" class="r" textLength="25.2" lengthAdjust="spacingAndGlyphs">BACKUP_ID</text>
<text x="533.1" y="532.8" class="ty" textLength="17.5" lengthAdjust="spacingAndGlyphs">TINYINT</text>
<g transform="translate(564.9,531.0)"><path d="M0.2 1.6 L3.4 -1.4" stroke="#3a78c8" stroke-width="1.5" fill="none"/><path d="M1.4 -2.6 L5 -2.6 L5 1 Z" fill="#3a78c8"/></g>
<rect x="722.5" y="431.5" width="85.0" height="47.1" fill="#fcfcc8" stroke="#c2c2ae" stroke-width="1"/>
<line x1="722.5" y1="442.5" x2="807.5" y2="442.5" stroke="#c2c2ae" stroke-width="1"/>
<text x="765.0" y="439.9" class="th" textLength="9.8" lengthAdjust="spacingAndGlyphs">CITY</text>
<text x="733.2" y="449.8" class="b">CITY_ID</text>
<text x="767.4" y="449.8" class="ty" textLength="22.0" lengthAdjust="spacingAndGlyphs">SMALLINT</text>
<g transform="translate(725.6,448.0)" stroke="#eab062" fill="none"><circle cx="3.3" cy="-2.3" r="1.2" stroke-width="1.1"/><path d="M2.4 -1.4 L-0.2 1.1" stroke-width="1"/><path d="M0.6 0.5 L1.3 1.2" stroke-width="0.7"/></g>
<text x="733.2" y="458.8" class="b">CITY</text>
<text x="767.4" y="458.8" class="ty" textLength="29.7" lengthAdjust="spacingAndGlyphs">VARCHAR(50)</text>
<text x="733.2" y="467.8" class="b">COUNTRY_ID</text>
<text x="767.4" y="467.8" class="ty" textLength="22.0" lengthAdjust="spacingAndGlyphs">SMALLINT</text>
<g transform="translate(798.9,466.0)"><path d="M0.2 1.6 L3.4 -1.4" stroke="#3a78c8" stroke-width="1.5" fill="none"/><path d="M1.4 -2.6 L5 -2.6 L5 1 Z" fill="#3a78c8"/></g>
<text x="733.2" y="475.8" class="b">LAST_UPDATE</text>
<text x="767.4" y="475.8" class="ty" textLength="25.9" lengthAdjust="spacingAndGlyphs">TIMESTAMP</text>
<rect x="832.5" y="449.5" width="79.0" height="38.4" fill="#fcfcc8" stroke="#c2c2ae" stroke-width="1"/>
<line x1="832.5" y1="459.5" x2="911.5" y2="459.5" stroke="#c2c2ae" stroke-width="1"/>
<text x="872.0" y="456.9" class="th" textLength="21.2" lengthAdjust="spacingAndGlyphs">COUNTRY</text>
<text x="843.9" y="467.8" class="b">COUNTRY_ID</text>
<text x="876.9" y="467.8" class="ty" textLength="22.0" lengthAdjust="spacingAndGlyphs">SMALLINT</text>
<g transform="translate(835.6,466.0)" stroke="#eab062" fill="none"><circle cx="3.3" cy="-2.3" r="1.2" stroke-width="1.1"/><path d="M2.4 -1.4 L-0.2 1.1" stroke-width="1"/><path d="M0.6 0.5 L1.3 1.2" stroke-width="0.7"/></g>
<text x="843.9" y="476.8" class="b">COUNTRY</text>
<text x="876.9" y="476.8" class="ty" textLength="29.7" lengthAdjust="spacingAndGlyphs">VARCHAR(50)</text>
<text x="843.9" y="485.8" class="b">LAST_UPDATE</text>
<text x="876.9" y="485.8" class="ty" textLength="25.9" lengthAdjust="spacingAndGlyphs">TIMESTAMP</text>
<rect x="6.5" y="463.5" width="90.0" height="73.2" fill="#fcfcc8" stroke="#c2c2ae" stroke-width="1"/>
<line x1="6.5" y1="474.5" x2="96.5" y2="474.5" stroke="#c2c2ae" stroke-width="1"/>
<text x="51.5" y="471.9" class="th" textLength="20.1" lengthAdjust="spacingAndGlyphs">PAYMENT</text>
<text x="17.1" y="481.8" class="b">PAYMENT_ID</text>
<text x="56.1" y="481.8" class="ty" textLength="22.0" lengthAdjust="spacingAndGlyphs">SMALLINT</text>
<g transform="translate(9.6,480.0)" stroke="#eab062" fill="none"><circle cx="3.3" cy="-2.3" r="1.2" stroke-width="1.1"/><path d="M2.4 -1.4 L-0.2 1.1" stroke-width="1"/><path d="M0.6 0.5 L1.3 1.2" stroke-width="0.7"/></g>
<text x="17.1" y="490.8" class="b">CUSTOMER_ID</text>
<text x="56.1" y="490.8" class="ty" textLength="22.0" lengthAdjust="spacingAndGlyphs">SMALLINT</text>
<g transform="translate(87.9,489.0)"><path d="M0.2 1.6 L3.4 -1.4" stroke="#3a78c8" stroke-width="1.5" fill="none"/><path d="M1.4 -2.6 L5 -2.6 L5 1 Z" fill="#3a78c8"/></g>
<text x="17.1" y="499.8" class="b">STAFF_ID</text>
<text x="56.1" y="499.8" class="ty" textLength="17.5" lengthAdjust="spacingAndGlyphs">TINYINT</text>
<g transform="translate(87.9,498.0)"><path d="M0.2 1.6 L3.4 -1.4" stroke="#3a78c8" stroke-width="1.5" fill="none"/><path d="M1.4 -2.6 L5 -2.6 L5 1 Z" fill="#3a78c8"/></g>
<text x="17.1" y="507.8" class="r" textLength="24.2" lengthAdjust="spacingAndGlyphs">RENTAL_ID</text>
<text x="56.1" y="507.8" class="ty" textLength="20.0" lengthAdjust="spacingAndGlyphs">INTEGER</text>
<g transform="translate(87.9,506.0)"><path d="M0.2 1.6 L3.4 -1.4" stroke="#3a78c8" stroke-width="1.5" fill="none"/><path d="M1.4 -2.6 L5 -2.6 L5 1 Z" fill="#3a78c8"/></g>
<text x="17.1" y="516.8" class="b">AMOUNT</text>
<text x="56.1" y="516.8" class="ty" textLength="29.3" lengthAdjust="spacingAndGlyphs">DECIMAL(5,2)</text>
<text x="17.1" y="525.8" class="b">PAYMENT_DATE</text>
<text x="56.1" y="525.8" class="ty" textLength="25.9" lengthAdjust="spacingAndGlyphs">TIMESTAMP</text>
<text x="17.1" y="533.8" class="r" textLength="31.3" lengthAdjust="spacingAndGlyphs">LAST_UPDATE</text>
<text x="56.1" y="533.8" class="ty" textLength="25.9" lengthAdjust="spacingAndGlyphs">TIMESTAMP</text>
<rect x="121.5" y="501.5" width="84.0" height="73.2" fill="#fcfcc8" stroke="#c2c2ae" stroke-width="1"/>
<line x1="121.5" y1="512.5" x2="205.5" y2="512.5" stroke="#c2c2ae" stroke-width="1"/>
<text x="163.5" y="509.9" class="th" textLength="16.6" lengthAdjust="spacingAndGlyphs">RENTAL</text>
<text x="133.0" y="519.8" class="b">RENTAL_ID</text>
<text x="168.0" y="519.8" class="ty" textLength="20.0" lengthAdjust="spacingAndGlyphs">INTEGER</text>
<g transform="translate(124.6,518.0)" stroke="#eab062" fill="none"><circle cx="3.3" cy="-2.3" r="1.2" stroke-width="1.1"/><path d="M2.4 -1.4 L-0.2 1.1" stroke-width="1"/><path d="M0.6 0.5 L1.3 1.2" stroke-width="0.7"/></g>
<text x="133.0" y="528.8" class="b">RENTAL_DATE</text>
<text x="168.0" y="528.8" class="ty" textLength="25.9" lengthAdjust="spacingAndGlyphs">TIMESTAMP</text>
<text x="133.0" y="537.8" class="b">INVENTORY_ID</text>
<text x="168.0" y="537.8" class="ty" textLength="20.0" lengthAdjust="spacingAndGlyphs">INTEGER</text>
<g transform="translate(196.9,536.0)"><path d="M0.2 1.6 L3.4 -1.4" stroke="#3a78c8" stroke-width="1.5" fill="none"/><path d="M1.4 -2.6 L5 -2.6 L5 1 Z" fill="#3a78c8"/></g>
<text x="133.0" y="545.8" class="b">CUSTOMER_ID</text>
<text x="168.0" y="545.8" class="ty" textLength="22.0" lengthAdjust="spacingAndGlyphs">SMALLINT</text>
<g transform="translate(196.9,544.0)"><path d="M0.2 1.6 L3.4 -1.4" stroke="#3a78c8" stroke-width="1.5" fill="none"/><path d="M1.4 -2.6 L5 -2.6 L5 1 Z" fill="#3a78c8"/></g>
<text x="133.0" y="554.8" class="r" textLength="32.6" lengthAdjust="spacingAndGlyphs">RETURN_DATE</text>
<text x="168.0" y="554.8" class="ty" textLength="25.9" lengthAdjust="spacingAndGlyphs">TIMESTAMP</text>
<text x="133.0" y="563.8" class="b">STAFF_ID</text>
<text x="168.0" y="563.8" class="ty" textLength="17.5" lengthAdjust="spacingAndGlyphs">TINYINT</text>
<g transform="translate(196.9,562.0)"><path d="M0.2 1.6 L3.4 -1.4" stroke="#3a78c8" stroke-width="1.5" fill="none"/><path d="M1.4 -2.6 L5 -2.6 L5 1 Z" fill="#3a78c8"/></g>
<text x="133.0" y="571.8" class="b">LAST_UPDATE</text>
<text x="168.0" y="571.8" class="ty" textLength="25.9" lengthAdjust="spacingAndGlyphs">TIMESTAMP</text>
<rect x="341" y="187" width="2" height="2" fill="#b8b8b8"/><rect x="341" y="315" width="2" height="2" fill="#b8b8b8"/><rect x="398" y="187" width="2" height="2" fill="#b8b8b8"/><rect x="398" y="315" width="2" height="2" fill="#b8b8b8"/><rect x="455" y="187" width="2" height="2" fill="#b8b8b8"/><rect x="455" y="315" width="2" height="2" fill="#b8b8b8"/><rect x="341" y="252" width="2" height="2" fill="#b8b8b8"/><rect x="455" y="252" width="2" height="2" fill="#b8b8b8"/>
<text x="12.6" y="570.2" font-family="Liberation Sans" font-size="12.8" fill="#c6c6c6" textLength="98" lengthAdjust="spacing">Powered by yFiles</text>
</g>
</svg>

<!-- status bar -->

<!-- right panel -->
<div class="gb" style="left:919px;top:110px;width:282px;height:57px"></div>
<div class="abs" style="left:923px;top:104px;width:87px;height:13px;background:#f2f2f2"></div>
<div class="gb" style="left:919px;top:181px;width:282px;height:243px"></div>
<div class="abs" style="left:923px;top:175px;width:85px;height:13px;background:#f2f2f2"></div>
<div class="abs" style="left:1024px;top:376px;width:99px;height:22px;background:#fff;border:1px solid #c8c8c8;border-radius:2px"></div>
<svg class="abs" style="left:1106px;top:383px" width="14" height="8"><path d="M1.5 1.5 L6.5 6 L11.5 1.5" fill="none" stroke="#606060" stroke-width="1"/></svg>
<!-- overview -->
<div class="gb" style="left:919px;top:436px;width:282px;height:180px"></div>
<div class="abs" style="left:923px;top:430px;width:125px;height:14px;background:#f2f2f2"></div>
<div class="abs" style="left:922px;top:447px;width:277px;height:158px;background:#fff"></div>
<svg class="abs" style="left:922px;top:505px" width="277" height="100" viewBox="922 505 277 100">
 <rect x="922.5" y="505.5" width="300" height="120" fill="#e6e6e6" stroke="#b4b4b4"/>
 <g transform="translate(921.0,473.5) scale(0.303)">
<path d="M467 244.5 L488 244.5" stroke="#b0e6b0" stroke-width="1" vector-effect="non-scaling-stroke" fill="none"/>
<path d="M455 248.5 L462.5 248.5 L462.5 244.5 L467.5 244.5" stroke="#b0e6b0" stroke-width="1" vector-effect="non-scaling-stroke" fill="none"/>
<path d="M455 240.5 L467.5 240.5 L467.5 244.5" stroke="#b0e6b0" stroke-width="1" vector-effect="non-scaling-stroke" fill="none"/>
<path d="M329 205.5 L340 205.5" stroke="#f0b6b6" stroke-width="1" vector-effect="non-scaling-stroke" fill="none"/>
<path d="M316 305.5 L329.5 305.5 L329.5 205.5" stroke="#f0b6b6" stroke-width="1" vector-effect="non-scaling-stroke" fill="none"/>
<path d="M316 213.5 L325.5 213.5 L325.5 205.5 L339 205.5" stroke="#f0b6b6" stroke-width="1" vector-effect="non-scaling-stroke" fill="none"/>
<path d="M316 135.5 L333.5 135.5 L333.5 205.5" stroke="#f0b6b6" stroke-width="1" vector-effect="non-scaling-stroke" fill="none"/>
<path d="M206 560.5 L222.5 560.5 L222.5 521.5 L467.5 521.5 L467.5 434.5 L488 434.5" stroke="#d6d6d6" stroke-width="1" vector-effect="non-scaling-stroke" fill="none"/>
<path d="M206 543.5 L218.5 543.5 L218.5 379.5" stroke="#d6d6d6" stroke-width="1" vector-effect="non-scaling-stroke" fill="none"/>
<path d="M206 534.5 L214.5 534.5 L214.5 296.5 L232 296.5" stroke="#d6d6d6" stroke-width="1" vector-effect="non-scaling-stroke" fill="none"/>
<path d="M97 505.5 L109.5 505.5 L109.5 517.5 L121 517.5" stroke="#d6d6d6" stroke-width="1" vector-effect="non-scaling-stroke" fill="none"/>
<path d="M97 496.5 L462.5 496.5 L462.5 434.5 L488 434.5" stroke="#d6d6d6" stroke-width="1" vector-effect="non-scaling-stroke" fill="none"/>
<path d="M97 488.5 L109.5 488.5 L109.5 379.5 L231 379.5" stroke="#d6d6d6" stroke-width="1" vector-effect="non-scaling-stroke" fill="none"/>
<path d="M808 465.5 L832 465.5" stroke="#d6d6d6" stroke-width="1" vector-effect="non-scaling-stroke" fill="none"/>
<path d="M698 447.5 L722 447.5" stroke="#d6d6d6" stroke-width="1" vector-effect="non-scaling-stroke" fill="none"/>
<path d="M574 530.5 L582.5 530.5 L582.5 539.5 L479.5 539.5 L479.5 434.5 L488 434.5" stroke="#d6d6d6" stroke-width="1" vector-effect="non-scaling-stroke" fill="none"/>
<path d="M574 486.5 L586.5 486.5 L586.5 543.5 L471.5 543.5 L471.5 492.5 L342.5 492.5 L342.5 388.5" stroke="#d6d6d6" stroke-width="1" vector-effect="non-scaling-stroke" fill="none"/>
<path d="M574 460.5 L594.5 460.5 L594.5 413.5 L611 413.5" stroke="#d6d6d6" stroke-width="1" vector-effect="non-scaling-stroke" fill="none"/>
<path d="M448 405.5 L598.5 405.5 L598.5 413.5 L611 413.5" stroke="#d6d6d6" stroke-width="1" vector-effect="non-scaling-stroke" fill="none"/>
<path d="M448 396.5 L471.5 396.5 L471.5 434.5 L488 434.5" stroke="#d6d6d6" stroke-width="1" vector-effect="non-scaling-stroke" fill="none"/>
<path d="M318 422.5 L325.5 422.5 L325.5 367.5 L603.5 367.5 L603.5 413.5 L611 413.5" stroke="#d6d6d6" stroke-width="1" vector-effect="non-scaling-stroke" fill="none"/>
<path d="M318 388.5 L329.5 388.5" stroke="#d6d6d6" stroke-width="1" vector-effect="non-scaling-stroke" fill="none"/>
<path d="M316 314.5 L329.5 314.5 L329.5 388.5 L350 388.5" stroke="#d6d6d6" stroke-width="1" vector-effect="non-scaling-stroke" fill="none"/>
<path d="M316 221.5 L333.5 221.5 L333.5 338.5 L359 338.5" stroke="#d6d6d6" stroke-width="1" vector-effect="non-scaling-stroke" fill="none"/>
<path d="M316 126.5 L359 126.5" stroke="#d6d6d6" stroke-width="1" vector-effect="non-scaling-stroke" fill="none"/>
<rect x="232.5" y="110.5" width="83.5" height="38.4" fill="#e8e8d4" stroke="#dcdccc" stroke-width="1.5"/>
<rect x="359.5" y="110.5" width="79.5" height="47.1" fill="#e8e8d4" stroke="#dcdccc" stroke-width="1.5"/>
<rect x="343.5" y="189.5" width="111.2" height="125.2" fill="#cbcbbb" stroke="#dcdccc" stroke-width="1.5"/>
<rect x="232.5" y="197.5" width="83.5" height="38.4" fill="#e8e8d4" stroke="#dcdccc" stroke-width="1.5"/>
<rect x="232.5" y="280.5" width="83.5" height="47.1" fill="#e8e8d4" stroke="#dcdccc" stroke-width="1.5"/>
<rect x="492.5" y="228.5" width="77.5" height="38.4" fill="#e8e8d4" stroke="#dcdccc" stroke-width="1.5"/>
<rect x="359.5" y="322.5" width="79.5" height="38.4" fill="#e8e8d4" stroke="#dcdccc" stroke-width="1.5"/>
<rect x="231.5" y="363.5" width="86.0" height="90.5" fill="#e8e8d4" stroke="#dcdccc" stroke-width="1.5"/>
<rect x="350.5" y="371.5" width="97.5" height="47.1" fill="#e8e8d4" stroke="#dcdccc" stroke-width="1.5"/>
<rect x="611.5" y="397.5" width="86.5" height="90.5" fill="#e8e8d4" stroke="#dcdccc" stroke-width="1.5"/>
<rect x="488.5" y="418.5" width="85.0" height="116.6" fill="#e8e8d4" stroke="#dcdccc" stroke-width="1.5"/>
<rect x="722.5" y="431.5" width="85.0" height="47.1" fill="#e8e8d4" stroke="#dcdccc" stroke-width="1.5"/>
<rect x="832.5" y="449.5" width="79.0" height="38.4" fill="#e8e8d4" stroke="#dcdccc" stroke-width="1.5"/>
<rect x="6.5" y="463.5" width="90.0" height="73.2" fill="#e8e8d4" stroke="#dcdccc" stroke-width="1.5"/>
<rect x="121.5" y="501.5" width="84.0" height="73.2" fill="#e8e8d4" stroke="#dcdccc" stroke-width="1.5"/>
 </g>
</svg>

<svg class="abs" style="left:0;top:0" width="1204" height="606" font-family="Liberation Sans, sans-serif">
<text x="33.4" y="20.7" font-size="12.6" fill="#000" font-weight="normal" textLength="56.4" lengthAdjust="spacingAndGlyphs">References</text>
<text x="339.8" y="88.9" font-size="12.8" fill="#000" font-weight="normal" textLength="103.4" lengthAdjust="spacingAndGlyphs">Layout: Hierarchical</text>
<text x="738.7" y="599.7" font-size="12.4" fill="#000" font-weight="normal" textLength="22.1" lengthAdjust="spacingAndGlyphs">41%</text>
<text x="775.8" y="599.7" font-size="12.4" fill="#000" font-weight="normal" textLength="50.2" lengthAdjust="spacingAndGlyphs">Tables: 15</text>
<text x="840.5" y="599.7" font-size="12.4" fill="#000" font-weight="normal" textLength="74.1" lengthAdjust="spacingAndGlyphs">References: 23</text>
<text x="925.9" y="115.2" font-size="13.0" fill="#000" font-weight="normal" textLength="81.6" lengthAdjust="spacingAndGlyphs">Display Options</text>
<text x="943.0" y="135.0" font-size="13.0" fill="#000" font-weight="normal" textLength="50.0" lengthAdjust="spacingAndGlyphs">All Tables</text>
<text x="1020.2" y="135.0" font-size="13.0" fill="#000" font-weight="normal" textLength="83.6" lengthAdjust="spacingAndGlyphs">Specified Tables</text>
<text x="980.5" y="159.0" font-size="13.0" fill="#000" font-weight="normal" textLength="86.7" lengthAdjust="spacingAndGlyphs">Referenced Only</text>
<text x="925.4" y="186.4" font-size="13.0" fill="#000" font-weight="normal" textLength="79.2" lengthAdjust="spacingAndGlyphs">Graph Controls</text>
<text x="992.7" y="206.0" font-size="13.0" fill="#000" font-weight="normal" textLength="26.9" lengthAdjust="spacingAndGlyphs">View:</text>
<text x="1045.3" y="206.0" font-size="13.0" fill="#000" font-weight="normal" textLength="30.9" lengthAdjust="spacingAndGlyphs">Graph</text>
<text x="1104.0" y="206.0" font-size="13.0" fill="#000" font-weight="normal" textLength="17.4" lengthAdjust="spacingAndGlyphs">List</text>
<text x="933.3" y="230.5" font-size="13.0" fill="#000" font-weight="normal" textLength="86.3" lengthAdjust="spacingAndGlyphs">Animate Layout:</text>
<text x="922.3" y="253.5" font-size="13.0" fill="#000" font-weight="normal" textLength="97.3" lengthAdjust="spacingAndGlyphs">One Link/Column:</text>
<text x="925.4" y="276.5" font-size="13.0" fill="#000" font-weight="normal" textLength="94.2" lengthAdjust="spacingAndGlyphs">Links to Columns:</text>
<text x="927.4" y="299.5" font-size="13.0" fill="#000" font-weight="normal" textLength="92.2" lengthAdjust="spacingAndGlyphs">Auto Link Layout:</text>
<text x="928.1" y="322.5" font-size="13.0" fill="#000" font-weight="normal" textLength="91.5" lengthAdjust="spacingAndGlyphs">Show Link Name:</text>
<text x="953.4" y="345.5" font-size="13.0" fill="#000" font-weight="normal" textLength="66.2" lengthAdjust="spacingAndGlyphs">Bridge Links:</text>
<text x="937.3" y="368.5" font-size="13.0" fill="#000" font-weight="normal" textLength="82.3" lengthAdjust="spacingAndGlyphs">Highlight Links:</text>
<text x="942.2" y="391.8" font-size="13.0" fill="#000" font-weight="normal" textLength="77.4" lengthAdjust="spacingAndGlyphs">Node Content:</text>
<text x="1031.3" y="391.8" font-size="13.0" fill="#000" font-weight="normal" textLength="47.0" lengthAdjust="spacingAndGlyphs">Columns</text>
<text x="1045.4" y="417.5" font-size="13.0" fill="#000" font-weight="normal" textLength="82.9" lengthAdjust="spacingAndGlyphs">Show Data Type</text>
<text x="927.5" y="441.8" font-size="13.0" fill="#000" font-weight="normal" textLength="101.9" lengthAdjust="spacingAndGlyphs">Overview - Docked:</text>
<circle cx="931.4" cy="130.4" r="6.8" fill="#fff" stroke="#a0a0a0" stroke-width="1"/>
<circle cx="931.4" cy="130.4" r="4.1" fill="#4a98e0"/>
<circle cx="1008.4" cy="130.4" r="6.8" fill="#fff" stroke="#a0a0a0" stroke-width="1"/>
<circle cx="1033.5" cy="201.4" r="6.8" fill="#fff" stroke="#a0a0a0" stroke-width="1"/>
<circle cx="1033.5" cy="201.4" r="4.1" fill="#4a98e0"/>
<circle cx="1092.0" cy="201.4" r="6.8" fill="#fff" stroke="#a0a0a0" stroke-width="1"/>
<rect x="962.7" y="147.8" width="12.5" height="12.5" rx="2" fill="#fff" stroke="#a2a2a2" stroke-width="1"/>
<path d="M965.2 154.3 L967.8000000000001 157.5 L972.8000000000001 150.5" fill="none" stroke="#4a9be8" stroke-width="1.9"/>
<rect x="1027.9" y="217.9" width="12.5" height="12.5" rx="2" fill="#fff" stroke="#a2a2a2" stroke-width="1"/>
<path d="M1030.4 224.4 L1033.0 227.6 L1038.0 220.6" fill="none" stroke="#4a9be8" stroke-width="1.9"/>
<rect x="1027.9" y="240.9" width="12.5" height="12.5" rx="2" fill="#fff" stroke="#a2a2a2" stroke-width="1"/>
<path d="M1030.4 247.4 L1033.0 250.6 L1038.0 243.6" fill="none" stroke="#4a9be8" stroke-width="1.9"/>
<rect x="1027.9" y="263.9" width="12.5" height="12.5" rx="2" fill="#fff" stroke="#a2a2a2" stroke-width="1"/>
<path d="M1030.4 270.4 L1033.0 273.59999999999997 L1038.0 266.59999999999997" fill="none" stroke="#4a9be8" stroke-width="1.9"/>
<rect x="1027.9" y="286.9" width="12.5" height="12.5" rx="2" fill="#fff" stroke="#a2a2a2" stroke-width="1"/>
<path d="M1030.4 293.4 L1033.0 296.59999999999997 L1038.0 289.59999999999997" fill="none" stroke="#4a9be8" stroke-width="1.9"/>
<rect x="1027.9" y="309.9" width="12.5" height="12.5" rx="2" fill="#fff" stroke="#a2a2a2" stroke-width="1"/>
<rect x="1027.9" y="332.9" width="12.5" height="12.5" rx="2" fill="#fff" stroke="#a2a2a2" stroke-width="1"/>
<path d="M1030.4 339.4 L1033.0 342.59999999999997 L1038.0 335.59999999999997" fill="none" stroke="#4a9be8" stroke-width="1.9"/>
<rect x="1027.9" y="355.9" width="12.5" height="12.5" rx="2" fill="#fff" stroke="#a2a2a2" stroke-width="1"/>
<path d="M1030.4 362.4 L1033.0 365.59999999999997 L1038.0 358.59999999999997" fill="none" stroke="#4a9be8" stroke-width="1.9"/>
<rect x="1027.9" y="406.3" width="12.5" height="12.5" rx="2" fill="#fff" stroke="#a2a2a2" stroke-width="1"/>
<path d="M1030.4 412.8 L1033.0 416.0 L1038.0 409.0" fill="none" stroke="#4a9be8" stroke-width="1.9"/>
<rect x="1031.9" y="429.8" width="12.5" height="12.5" rx="2" fill="#fff" stroke="#a2a2a2" stroke-width="1"/>
<path d="M1034.4 436.3 L1037.0 439.5 L1042.0 432.5" fill="none" stroke="#4a9be8" stroke-width="1.9"/>
</svg>
<div id="win"></div>
</body></html>
